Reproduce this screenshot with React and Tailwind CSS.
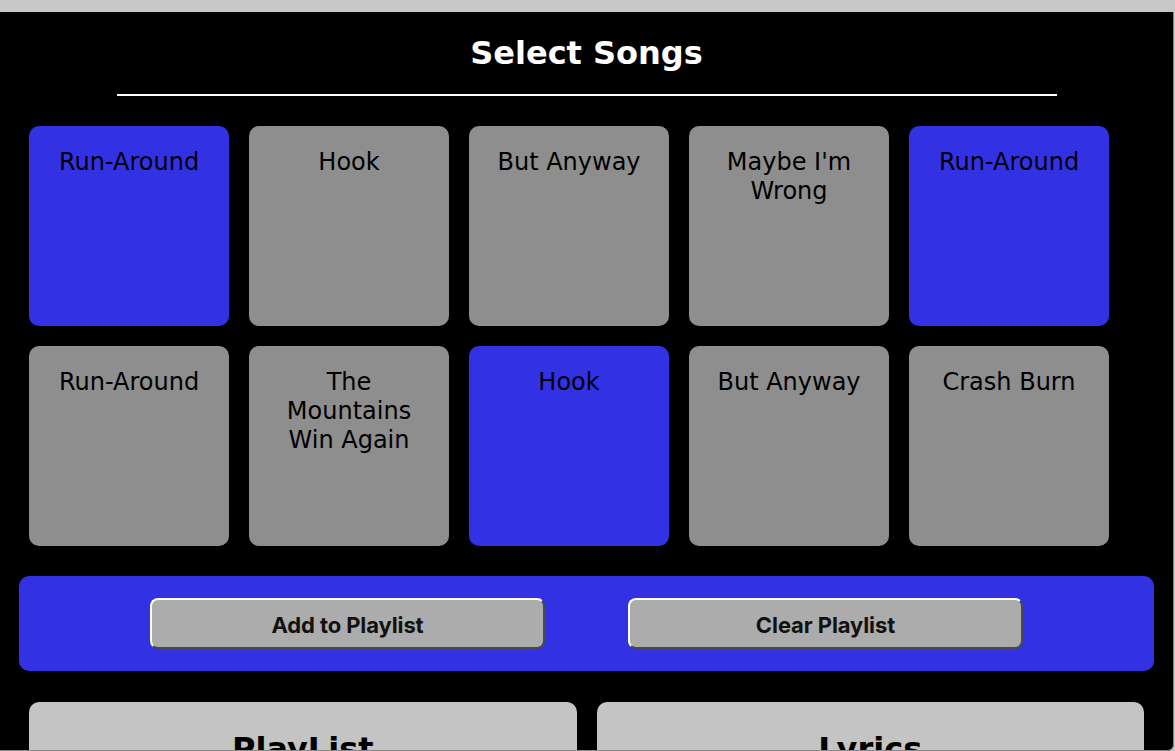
import React from 'react'

const songs = [
  { title: 'Run-Around', picked: true },
  { title: 'Hook', picked: false },
  { title: 'But Anyway', picked: false },
  { title: "Maybe I'm Wrong", picked: false },
  { title: 'Run-Around', picked: true },
  { title: 'Run-Around', picked: false },
  { title: 'The Mountains Win Again', picked: false },
  { title: 'Hook', picked: true },
  { title: 'But Anyway', picked: false },
  { title: 'Crash Burn', picked: false },
]

function SongCard({ title, picked }) {
  return (
    <div
      className={`w-[200px] h-[200px] rounded-[10px] px-[20px] pt-[22px] text-center text-[24px] leading-[29px] text-black ${picked ? 'bg-[#3232e4]' : 'bg-[#8e8e8e]'}`}
      style={{ fontFamily: '"DejaVu Sans", Verdana, sans-serif' }}
    >
      {title}
    </div>
  )
}

function ActionButton({ children }) {
  return (
    <button
      className="w-[395px] h-[51px] rounded-[8px] border-2 border-solid border-t-white border-l-white border-r-[#4a4a4a] border-b-[#4a4a4a] bg-[#acacac] pt-[3px] text-[22px] font-bold tracking-[-0.1px] text-[#111] flex items-center justify-center"
      style={{ fontFamily: 'Inter, "Liberation Sans", sans-serif' }}
    >
      {children}
    </button>
  )
}

export default function App() {
  return (
    <div className="w-[1175px] h-[751px] overflow-hidden bg-[#c8c8c8] pt-[12px]">
      <div className="w-[1174px] h-[739px] bg-black overflow-hidden border-r border-b border-[#8a8a8a] rounded-br-[6px] px-[19px]">
        <h1
          className="pt-[23px] text-center text-[32px] leading-[37px] font-bold text-white"
          style={{ fontFamily: '"DejaVu Sans", Verdana, sans-serif' }}
        >
          Select Songs
        </h1>
        <div className="mt-[22px] mx-auto w-[940px] h-[2px] bg-white" />

        {/* song grid */}
        <div className="mt-[30px] pl-[10px] flex flex-wrap gap-[20px]">
          {songs.map((s, i) => (
            <SongCard key={i} title={s.title} picked={s.picked} />
          ))}
        </div>

        {/* actions */}
        <div className="mt-[30px] h-[95px] rounded-[10px] bg-[#3232e4] flex items-center justify-center gap-[83px]">
          <ActionButton>Add to Playlist</ActionButton>
          <ActionButton>Clear Playlist</ActionButton>
        </div>

        {/* playlist + lyrics */}
        <div className="mt-[31px] px-[10px] flex gap-[20px]">
          <div className="flex-1 h-[300px] rounded-[10px] bg-[#c4c4c4] pt-[29px]">
            <h2
              className="text-center text-[32px] leading-[37px] font-bold text-black"
              style={{ fontFamily: '"DejaVu Sans", Verdana, sans-serif' }}
            >
              PlayList
            </h2>
          </div>
          <div className="flex-1 h-[300px] rounded-[10px] bg-[#c4c4c4] pt-[29px]">
            <h2
              className="text-center text-[32px] leading-[37px] font-bold text-black"
              style={{ fontFamily: '"DejaVu Sans", Verdana, sans-serif' }}
            >
              Lyrics
            </h2>
          </div>
        </div>
      </div>
    </div>
  )
}
